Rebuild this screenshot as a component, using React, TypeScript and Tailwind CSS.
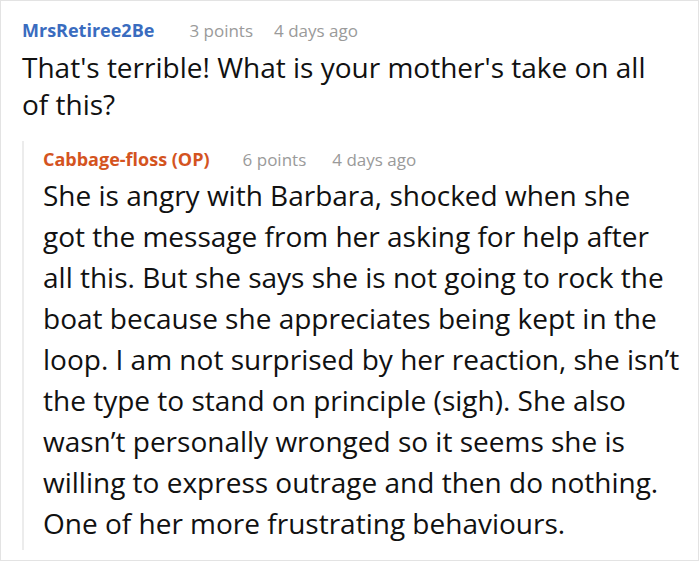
const replyLines = [
  'She is angry with Barbara, shocked when she',
  'got the message from her asking for help after',
  'all this. But she says she is not going to rock the',
  'boat because she appreciates being kept in the',
  'loop. I am not surprised by her reaction, she isn’t',
  'the type to stand on principle (sigh). She also',
  'wasn’t personally wronged so it seems she is',
  'willing to express outrage and then do nothing.',
  'One of her more frustrating behaviours.',
]

export default function App() {
  return (
    <div className="w-[700px] h-[562px] bg-white" style={{ fontFamily: '"Open Sans", "Noto Sans", sans-serif' }}>
      <div className="w-[699px] h-[561px] border border-[#e3e3e3] overflow-hidden pl-[21px] pt-[14px]">
        {/* parent comment */}
        <div className="flex items-baseline text-[17px] leading-[30px]">
          <span className="font-bold text-[18px] text-[#3a6cbf] mr-[35px]">MrsRetiree2Be</span>
          <span className="text-[#9a9a9a] mr-[21px]">3 points</span>
          <span className="text-[#9a9a9a]">4 days ago</span>
        </div>
        <p className="text-[28px] leading-[37px] text-[#111] mt-[3px] whitespace-nowrap">
          That's terrible! What is your mother's take on all
          <br />
          of this?
        </p>

        {/* reply */}
        <div className="mt-[18px] border-l-2 border-[#ececec] pl-[19px] pb-[6px]">
          <div className="flex items-baseline text-[17px] leading-[30px] pt-[3px]">
            <span className="font-bold text-[18px] text-[#d4541f] mr-[33px]">Cabbage-floss (OP)</span>
            <span className="text-[#9a9a9a] mr-[26px]">6 points</span>
            <span className="text-[#9a9a9a]">4 days ago</span>
          </div>
          <div className="text-[28px] leading-[41px] text-[#111] whitespace-nowrap">
            {replyLines.map(l => (
              <div key={l}>{l}</div>
            ))}
          </div>
        </div>
      </div>
    </div>
  )
}
